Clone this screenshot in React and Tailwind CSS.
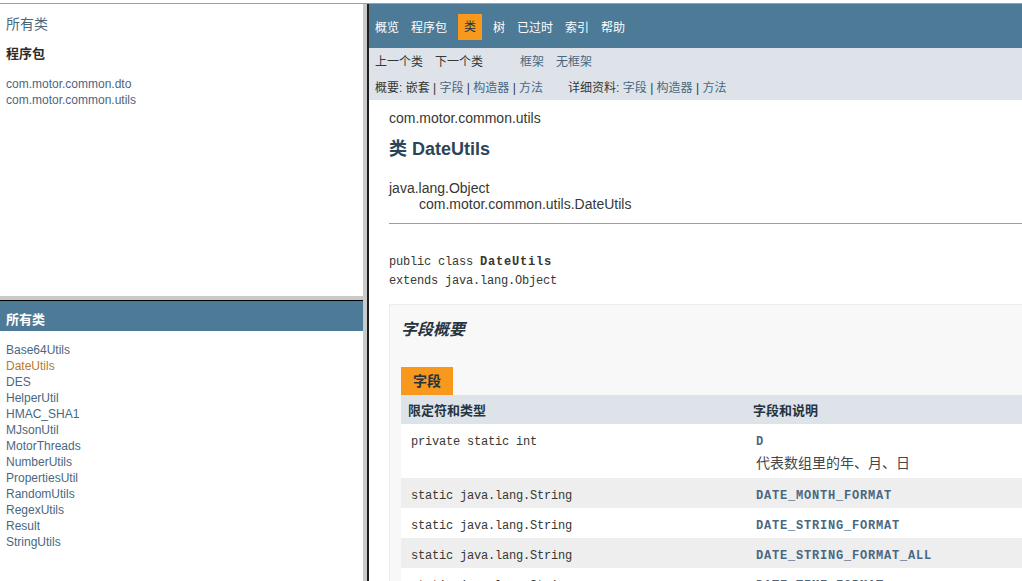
import React from 'react'

const classes = ['Base64Utils','DateUtils','DES','HelperUtil','HMAC_SHA1','MJsonUtil','MotorThreads','NumberUtils','PropertiesUtil','RandomUtils','RegexUtils','Result','StringUtils']

const nav = ['概览','程序包','类','树','已过时','索引','帮助']

const fields = [
  { type: 'static java.lang.String', name: 'DATE_MONTH_FORMAT' },
  { type: 'static java.lang.String', name: 'DATE_STRING_FORMAT' },
  { type: 'static java.lang.String', name: 'DATE_STRING_FORMAT_ALL' },
  { type: 'static java.lang.String', name: 'DATE_TIME_FORMAT' },
]

function TopNav(){
  return (
    <div className="flex h-[44px] bg-[#4D7A97] pt-[10px] text-[12px] leading-[16px]">
      {nav.map(n => n === '类' ? (
        <div key={n} className="ml-[5px] h-[26px] bg-[#F8981D] px-[6px] py-[5px] text-[#253441]">{n}</div>
      ) : (
        <div key={n} className={(n === '树' ? 'ml-[5px] ' : '') + 'h-[26px] px-[6px] pb-[4px] pt-[6px] text-white'}>{n}</div>
      ))}
    </div>
  )
}

function SubNav(){
  return (
    <div className="h-[52px] bg-[#dee3e9] pl-[6px] pt-[6px] text-[12px] leading-[16px]">
      <div className="flex">
        <span>上一个类</span>
        <span className="ml-[12px]">下一个类</span>
        <span className="ml-[37px] text-[#4A6782]">框架</span>
        <span className="ml-[12px] text-[#4A6782]">无框架</span>
      </div>
      <div className="mt-[10px] flex whitespace-pre">
        <span>概要: 嵌套 | <span className="text-[#4A6782]">字段</span> | <span className="text-[#4A6782]">构造器</span> | <span className="text-[#4A6782]">方法</span></span>
        <span className="ml-[25px]">详细资料: <span className="text-[#4A6782]">字段</span> | <span className="text-[#4A6782]">构造器</span> | <span className="text-[#4A6782]">方法</span></span>
      </div>
    </div>
  )
}

function FieldSummary(){
  return (
    <div className="mt-[13px] w-[700px] border border-[#ededed] bg-[#f8f8f8] pl-[11px]">
      <div className="pt-[15px] text-[16px] font-bold italic leading-[20px] text-[#253441]">字段概要</div>
      <div className="mt-[27px] flex">
        <div className="h-[28px] bg-[#F8981D] px-[12px] text-[14px] font-bold leading-[28px] text-[#253441]">字段</div>
      </div>
      <div className="flex h-[29px] bg-[#dee3e9] pt-[8px] text-[13px] font-bold leading-[16px] text-[#253441]">
        <div className="w-[345px] pl-[7px]">限定符和类型</div>
        <div className="pl-[7px]">字段和说明</div>
      </div>
      <div className="flex h-[54px] bg-white pt-[10px]">
        <div className="w-[345px] pl-[10px] font-['Liberation_Mono',monospace] text-[12px] leading-[16px] tracking-[-0.2px]">private static int</div>
        <div className="pl-[10px]">
          <div className="font-['Liberation_Mono',monospace] text-[12px] font-bold leading-[16px] tracking-[0.8px] text-[#4A6782]">D</div>
          <div className="mt-[3px] text-[14px] leading-[20px] text-[#474747]">代表数组里的年、月、日</div>
        </div>
      </div>
      {fields.map((f, i) => (
        <div key={f.name} className={(i % 2 === 0 ? 'bg-[#EEEEEF] ' : 'bg-white ') + 'flex h-[30px] pt-[10px] font-[\'Liberation_Mono\',monospace] text-[12px] leading-[16px]'}>
          <div className="w-[345px] pl-[10px] tracking-[-0.2px]">{f.type}</div>
          <div className="pl-[10px] font-bold tracking-[0.8px] text-[#4A6782]">{f.name}</div>
        </div>
      ))}
    </div>
  )
}

export default function App(){
  return (
    <div className="h-[581px] w-[1022px] overflow-hidden bg-white pt-[3px] font-['Liberation_Sans','Noto_Sans_CJK_SC',sans-serif] text-[#353833]">
      <div className="flex h-[578px] border-t border-[#a0a0a0]">
        <div className="flex w-[363px] flex-col">
          <div className="h-[292px] px-[6px] pt-[10px]">
            <div className="text-[14px] leading-[20px] text-[#4A6782]">所有类</div>
            <div className="mt-[10px] text-[13px] font-bold leading-[20px] text-[#2c2c2c]">程序包</div>
            <div className="mt-[12px] text-[12px] leading-[16px] text-[#4A6782]">
              <div>com.motor.common.dto</div>
              <div>com.motor.common.utils</div>
            </div>
          </div>
          <div className="h-[4px] bg-[#c9c9c9]" />
          <div className="flex-1 border-t border-black">
            <div className="h-[30px] bg-[#4D7A97] pl-[6px] pt-[10px] text-[13px] font-bold leading-[18px] text-white">所有类</div>
            <div className="mt-[11px] pl-[6px] text-[12px] leading-[16px] text-[#4A6782]">
              {classes.map(c => (
                <div key={c} className={c === 'DateUtils' ? 'text-[#bb7a2a]' : ''}>{c}</div>
              ))}
            </div>
          </div>
        </div>
        <div className="w-[4px] bg-[#c9c9c9]" />
        <div className="w-[2px] bg-[#1e1e1e]" />
        <div className="flex-1 overflow-hidden">
          <TopNav />
          <SubNav />
          <div className="pl-[20px]">
            <div className="mt-[8px] text-[14px] leading-[20px]">com.motor.common.utils</div>
            <div className="mt-[9px] text-[18px] font-bold leading-[24px] text-[#2c4557]">类 DateUtils</div>
            <div className="mt-[19px] text-[14px] leading-[16px]">
              <div>java.lang.Object</div>
              <div className="pl-[30px]">com.motor.common.utils.DateUtils</div>
            </div>
            <div className="mt-[11px] border-t border-[#9d9d9d]" />
            <div className="mt-[29px] font-['Liberation_Mono',monospace] text-[12px] leading-[19px] tracking-[-0.2px]">
              <div>public class <span className="font-bold tracking-[0.8px]">DateUtils</span></div>
              <div>extends java.lang.Object</div>
            </div>
            <FieldSummary />
          </div>
        </div>
      </div>
    </div>
  )
}
